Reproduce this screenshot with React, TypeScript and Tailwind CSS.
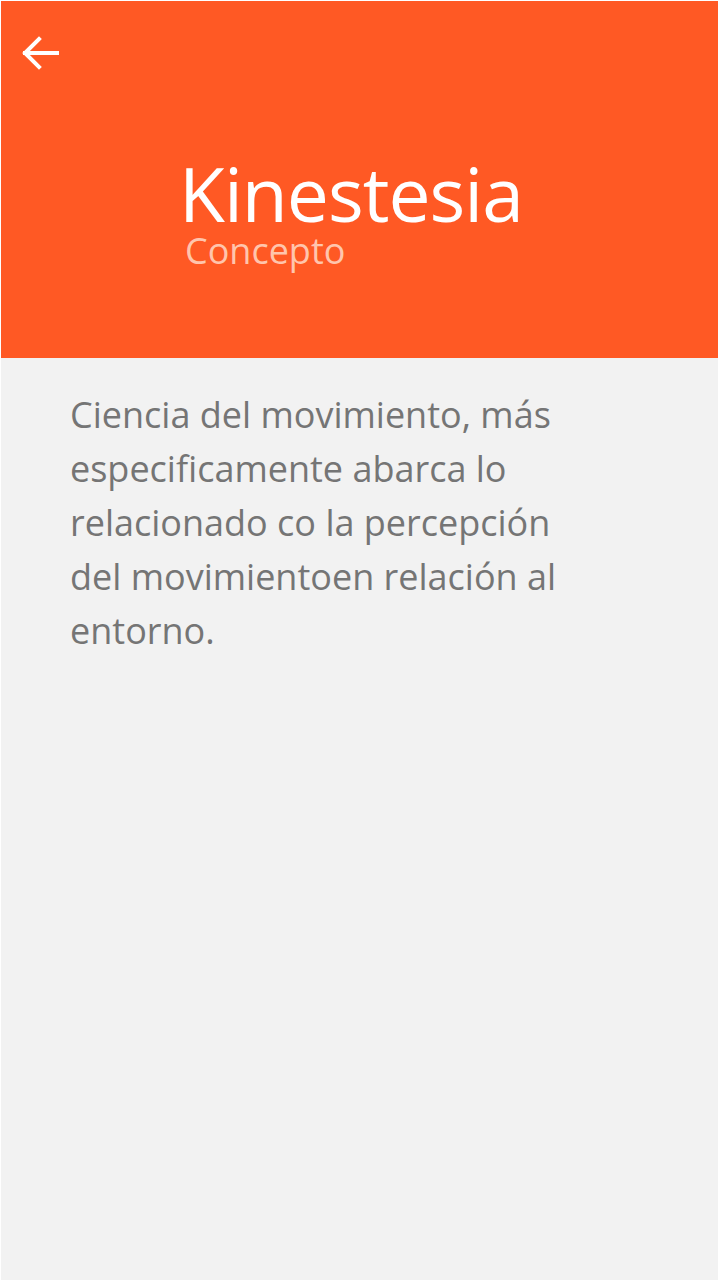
import React from 'react';

function BackArrow() {
  return (
    <svg width="40" height="40" viewBox="0 0 40 40" fill="none" stroke="white" strokeWidth="4" strokeLinecap="square">
      <path d="M37 18H5" />
      <path d="M19 4L5 18L19 32" />
    </svg>
  );
}

export default function App() {
  return (
    <div className="w-[721px] h-[1281px] bg-white pl-px pt-px pr-[3px] pb-px" style={{ fontFamily: '"Open Sans", sans-serif' }}>
      <div className="h-full flex flex-col bg-[#f2f2f2]">
        <header className="h-[357px] bg-[#ff5924] flex flex-col">
          <button className="ml-[19px] mt-[34px] w-10 h-10">
            <BackArrow />
          </button>
          <div className="ml-[178px] mt-[81px]">
            <h1 className="text-[75px] leading-[75px] text-white tracking-[-1px]">Kinestesia</h1>
            <p className="ml-[6px] text-[36px] leading-[40px] text-[#ffc5ad]">Concepto</p>
          </div>
        </header>
        <main className="pl-[69px] pt-[30px]">
          <p className="w-[500px] text-[36px] leading-[54px] text-[#757575]">
            Ciencia del movimiento, más especificamente abarca lo relacionado co la percepción del movimientoen relación al entorno.
          </p>
        </main>
      </div>
    </div>
  );
}
